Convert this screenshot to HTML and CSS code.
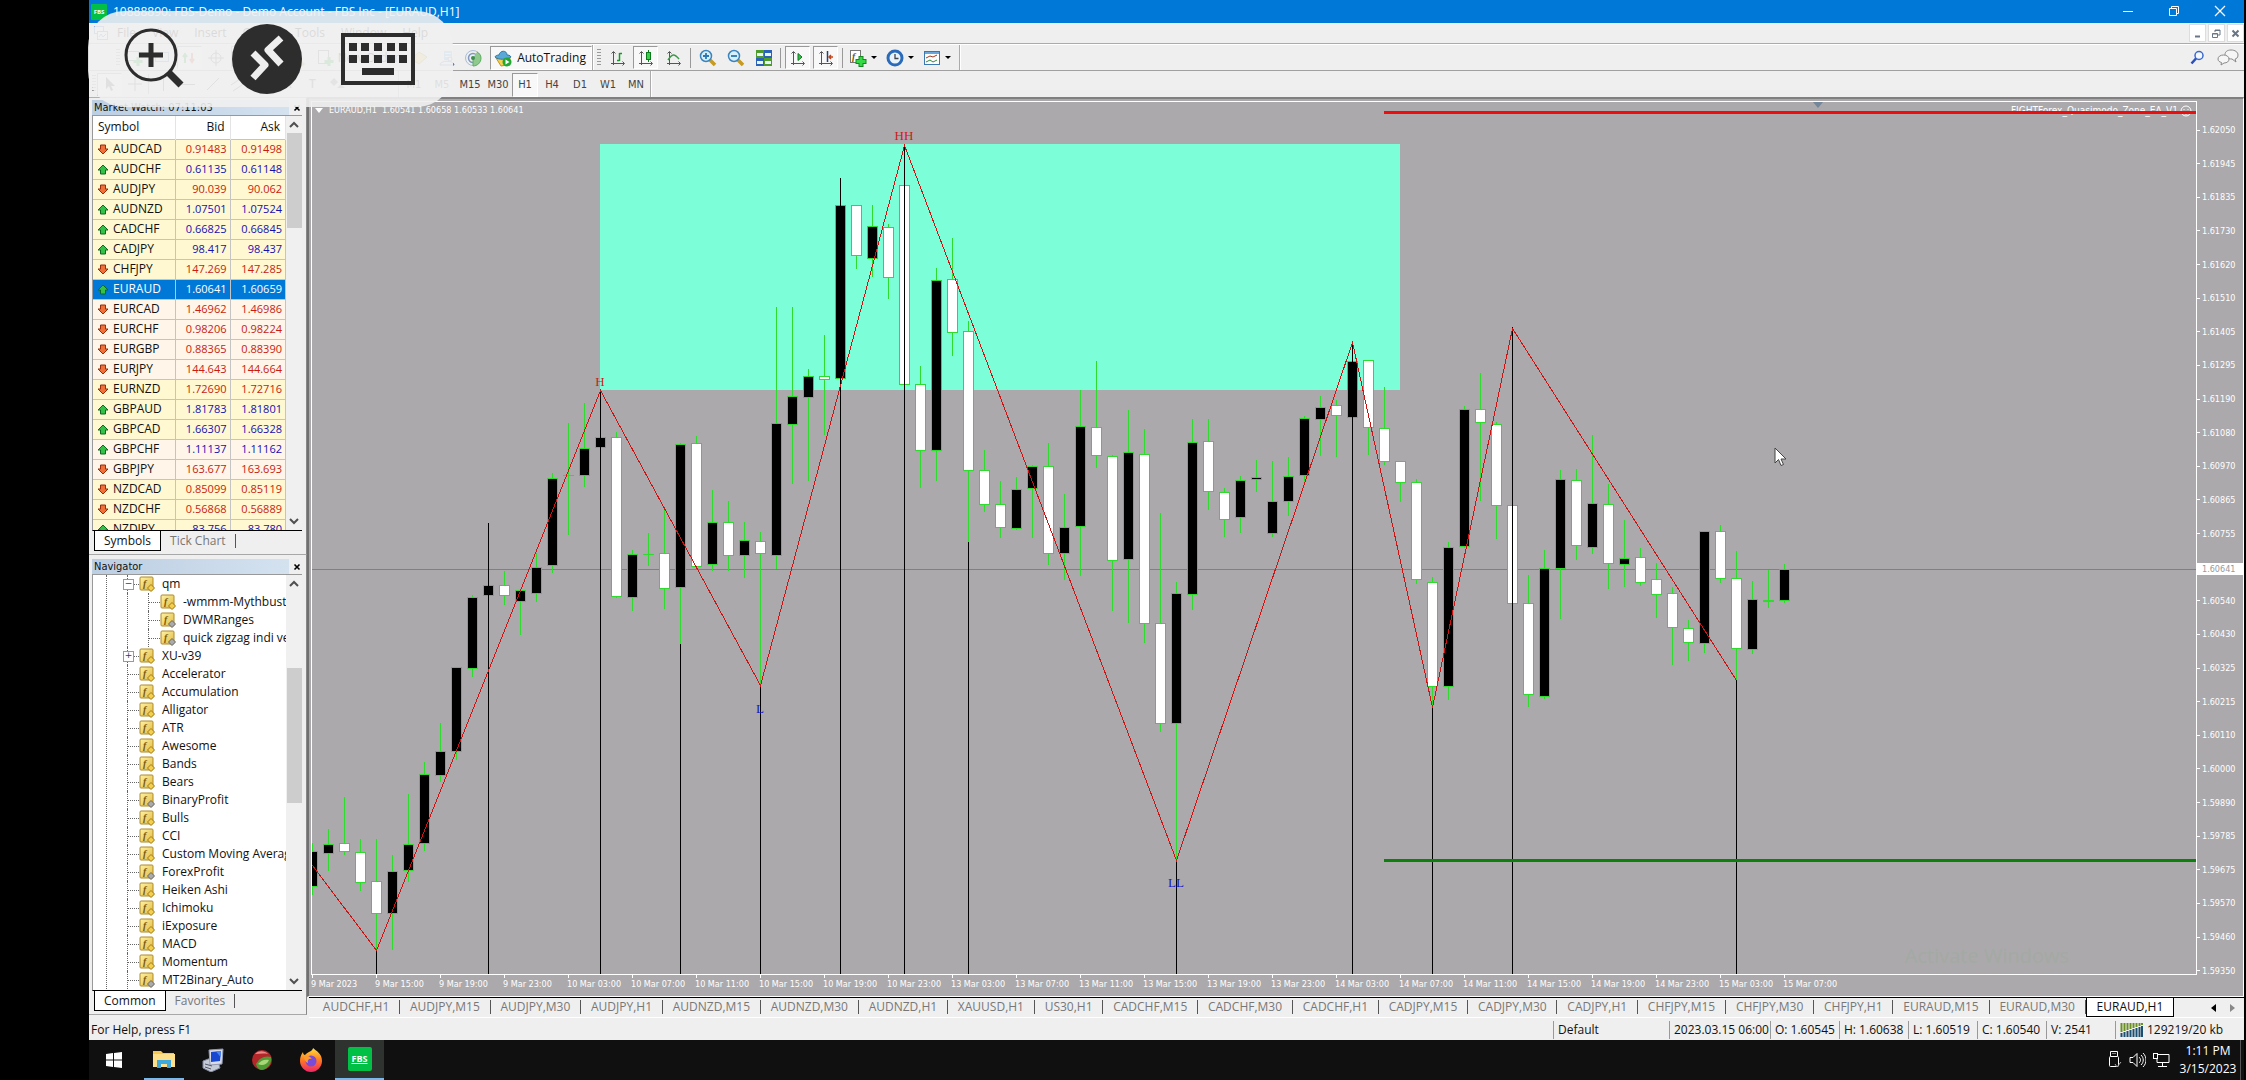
FILE: index.html
```html
<!DOCTYPE html>
<html lang="en">
<head>
<meta charset="utf-8">
<title>10888890: FBS-Demo - Demo Account - FBS Inc - [EURAUD,H1]</title>
<link rel="stylesheet" href="styles.css">
</head>
<body>
<svg class="defs" aria-hidden="true">
  <defs>
    <linearGradient id="gold" x1="0" y1="0" x2="1" y2="1"><stop offset="0" stop-color="#fdf3a8"/><stop offset="1" stop-color="#e3b93c"/></linearGradient>
    <linearGradient id="fire" x1="0" y1="0" x2="0" y2="1"><stop offset="0" stop-color="#ffdf3a"/><stop offset=".5" stop-color="#ff7b22"/><stop offset="1" stop-color="#f0246a"/></linearGradient>
    <symbol id="up" viewBox="0 0 12 11"><path d="M6 1 11 6H8.500V10H3.500V6H1Z" fill="#35c04a" stroke="#0e6a1c"/></symbol>
    <symbol id="down" viewBox="0 0 12 11"><path d="M6 10 11 5H8.500V1H3.500V5H1Z" fill="#f0703a" stroke="#9a2c08"/></symbol>
    <symbol id="fx" viewBox="0 0 16 16"><rect x="1" y="1" width="13" height="13" rx="1" fill="url(#gold)" stroke="#b08a28"/><text x="4" y="11" class="fx-letter">f</text><path d="M12 8.500 15.500 12 12 15.500 8.500 12Z" fill="#f3cf4e" stroke="#a07818"/></symbol>
    <symbol id="fx-custom" viewBox="0 0 16 16"><rect x="1" y="1" width="13" height="13" rx="1" fill="url(#gold)" stroke="#b08a28"/><text x="4" y="11" class="fx-letter">f</text><path d="M12 8.500 15.500 12 12 15.500 8.500 12Z" fill="#aaa" stroke="#666"/></symbol>
    <symbol id="chev-up" viewBox="0 0 10 8"><path d="M1 6 5 2l4 4" fill="none" stroke="#505050" stroke-width="2"/></symbol>
    <symbol id="chev-down" viewBox="0 0 10 8"><path d="M1 2 5 6l4-4" fill="none" stroke="#505050" stroke-width="2"/></symbol>
    <symbol id="x" viewBox="0 0 8 8"><path d="M1.500 1.500l5 5M6.500 1.500l-5 5" stroke="#000" stroke-width="1.600"/></symbol>
  </defs>
</svg>

<div class="desktop">
  <div class="app">
    <header class="titlebar">
      <span class="fbs">FBS</span>
      <h1>10888890: FBS-Demo - Demo Account - FBS Inc - [EURAUD,H1]</h1>
      <div class="window-buttons">
        <button aria-label="Minimize"><svg width="12" height="12"><path d="M1 6.500h10" stroke="#fff"/></svg></button>
        <button aria-label="Restore"><svg width="12" height="12" fill="none" stroke="#fff"><path d="M1.500 3.500h7v7h-7zM3.500 3V1.500h7v7H9"/></svg></button>
        <button aria-label="Close"><svg width="12" height="12"><path d="M1 1l10 10M11 1 1 11" stroke="#fff" stroke-width="1.200"/></svg></button>
      </div>
    </header>

    <nav class="menubar">
      <svg width="16" height="16"><rect x="1.500" y="1.500" width="9" height="7" fill="#fff" stroke="#3c78c8"/><rect x="4.500" y="6.500" width="10" height="8" fill="#fff" stroke="#3c78c8"/><path d="M6 12l2-3 2 3 3-3" fill="none" stroke="#3c78c8"/></svg>
      <button>File</button><button>View</button><button>Insert</button><button>Charts</button><button>Tools</button><button>Window</button><button>Help</button>
      <div class="mdi-buttons">
        <button aria-label="Minimize chart"><svg width="9" height="9"><path d="M2 7.500h5" stroke="#6a7686" stroke-width="2"/></svg></button>
        <button aria-label="Restore chart"><svg width="9" height="9" fill="none" stroke="#6a7686"><path d="M.5 4.500h5v4h-5zM3 3V1h5v5H6M.5 5h5M3 1.500h5"/></svg></button>
        <button aria-label="Close chart"><svg width="9" height="9"><path d="M1.500 1.500l6 6M7.500 1.500l-6 6" stroke="#6a7686" stroke-width="2"/></svg></button>
      </div>
    </nav>

    <div class="toolbar">
      <div class="group group-main">
        <i class="grip"></i>
        <button class="tool" aria-label="New chart"><svg width="18" height="18"><rect x="1.500" y="2.500" width="11" height="9" fill="#fff" stroke="#3a7a4a"/><path d="M12 8v9M7.500 12.500h9" stroke="#1fae2c" stroke-width="3"/></svg></button>
        <button class="tool" aria-label="Profiles"><svg width="18" height="18"><rect x="2.500" y="3.500" width="13" height="9" fill="#cfe3f8" stroke="#4a84c0"/></svg></button>
        <button class="tool pressed" aria-label="Market Watch"><svg width="18" height="18"><path d="M5 14V6M3 8l2-3 2 3" stroke="#1fae2c" stroke-width="2" fill="none"/><path d="M12 4v8M10 10l2 3 2-3" stroke="#e0532a" stroke-width="2" fill="none"/></svg></button>
        <button class="tool" aria-label="Data Window"><svg width="18" height="18" fill="none" stroke="#555"><circle cx="9" cy="9" r="5"/><path d="M9 1v16M1 9h16"/></svg></button>
        <button class="tool pressed" aria-label="Navigator"><svg width="18" height="18"><rect x="2.500" y="3.500" width="13" height="11" fill="#fff1b0" stroke="#b08a28"/></svg></button>
        <button class="tool" aria-label="Terminal"><svg width="18" height="18"><rect x="2.500" y="3.500" width="13" height="11" fill="#fff" stroke="#4a84c0"/></svg></button>
        <button class="tool" aria-label="Strategy Tester"><svg width="18" height="18"><circle cx="7" cy="7" r="5" fill="#bfe0f8" stroke="#4a84c0"/><path d="M11 11l5 5" stroke="#c79a20" stroke-width="3"/></svg></button>
        <button class="order"><svg width="18" height="18"><rect x="1.500" y="1.500" width="10" height="13" fill="#fff" stroke="#666"/><path d="M12 8v9M7.500 12.500h9" stroke="#1fae2c" stroke-width="3"/></svg>New Order</button>
        <button class="tool" aria-label="MetaEditor"><svg width="18" height="18"><path d="M1 10 9 3l8 5-8 7z" fill="#f3c64a" stroke="#b58a1c"/></svg></button>
        <button class="tool" aria-label="MQL5 community"><svg width="18" height="18"><path d="M7 2h8v9H7z" fill="#58b2ee"/><path d="M8 4.500h6M8 7.500h6" stroke="#fff"/><circle cx="13" cy="10" r="2" fill="#fff" stroke="#4a6aa0"/><path d="M3 16c0-5 14-5 14 0z" fill="#e8eef8" stroke="#4a6aa0"/></svg></button>
        <button class="tool" aria-label="Signals"><svg width="18" height="18" fill="none"><circle cx="9" cy="9" r="7.500" stroke="#a9bfd8"/><circle cx="9" cy="9" r="4.500" stroke="#8098c0" stroke-width="1.500"/><path d="M9 9v8c4 0 8-3 8-8 0-3-2-5-4-6" fill="#8fc98d" stroke="#5cb060"/><circle cx="9" cy="9" r="2" fill="#3c8c50"/></svg></button>
        <button class="auto pressed"><svg width="19" height="18"><path d="M2 9h14l-3 7-6 1z" fill="#f5cf4e" stroke="#c09320"/><path d="M1 8c3 3 12 3 16 0-1-2-3-2-4-2 0-5-7-5-8 0-2 0-4 1-4 2z" fill="#5aa8d8" stroke="#2f78a8"/><circle cx="13" cy="13" r="4.500" fill="#22a832"/><path d="M11.500 10.500v5l4-2.500z" fill="#fff"/></svg>AutoTrading</button>
      </div>
      <div class="group group-chart">
        <i class="grip"></i>
        <button class="tool" aria-label="Bar chart"><svg width="18" height="18" fill="none"><path d="M4.500 3v13M2 14.500h13M2.500 4.500l2-2 2 2M13.500 12.500l2 2-2 2" stroke="#555"/><path d="M10.500 4v8M8 11.500h2.500M10.500 4.500H13" stroke="#159a28" stroke-width="1.500"/></svg></button>
        <button class="tool pressed" aria-label="Candlesticks"><svg width="18" height="18" fill="none"><path d="M4.500 3v13M2 14.500h13M2.500 4.500l2-2 2 2M13.500 12.500l2 2-2 2" stroke="#555"/><path d="M11.500 1v12" stroke="#0d7a1c"/><rect x="9.500" y="3.500" width="4" height="7" fill="#3ad04c" stroke="#0d7a1c"/></svg></button>
        <button class="tool" aria-label="Line chart"><svg width="18" height="18" fill="none"><path d="M4.500 3v13M2 14.500h13M2.500 4.500l2-2 2 2M13.500 12.500l2 2-2 2" stroke="#555"/><path d="M3 11C7 5 9 4 14 10" stroke="#3a9a48" stroke-width="1.500"/></svg></button>
        <i class="sep"></i>
        <button class="tool" aria-label="Zoom in"><svg width="18" height="18"><path d="M11 11l5 5" stroke="#c79a20" stroke-width="3.500"/><circle cx="7" cy="7" r="5.500" fill="#d8f0fc" stroke="#3c84bc" stroke-width="1.500"/><path d="M4 7h6M7 4v6" stroke="#2c78b4" stroke-width="1.800"/></svg></button>
        <button class="tool" aria-label="Zoom out"><svg width="18" height="18"><path d="M11 11l5 5" stroke="#c79a20" stroke-width="3.500"/><circle cx="7" cy="7" r="5.500" fill="#d8f0fc" stroke="#3c84bc" stroke-width="1.500"/><path d="M4 7h6" stroke="#2c78b4" stroke-width="1.800"/></svg></button>
        <button class="tool" aria-label="Tile windows"><svg width="18" height="18"><path d="M1 1h8v8H1zM9 9h8v8H9z" fill="#4d9c2c"/><path d="M9 1h8v8H9zM1 9h8v8H1z" fill="#2a62b8"/><path d="M2 4h6v3H2zM10 4h6v3h-6zM2 12h6v3H2zM10 12h6v3h-6z" fill="#e8f4ff"/></svg></button>
        <i class="sep"></i>
        <button class="tool pressed" aria-label="Auto scroll"><svg width="18" height="18" fill="none"><path d="M4.500 3v13M2 14.500h13M2.500 4.500l2-2 2 2M13.500 12.500l2 2-2 2" stroke="#555"/><path d="M9 4.500v7l4-3.500z" fill="#35c04a" stroke="#0d7a1c"/></svg></button>
        <button class="tool pressed" aria-label="Chart shift"><svg width="18" height="18" fill="none"><path d="M4.500 3v13M2 14.500h13M2.500 4.500l2-2 2 2M13.500 12.500l2 2-2 2" stroke="#555"/><path d="M10.500 2v11" stroke="#27407a" stroke-width="1.500"/><path d="M16 8h-4M14 6l-2 2 2 2" stroke="#c0441c" stroke-width="1.500"/></svg></button>
        <i class="sep"></i>
        <button class="tool menu" aria-label="Indicators"><svg width="18" height="18"><rect x="1.500" y="1.500" width="10" height="12" fill="#fff" stroke="#777"/><text x="3" y="11" class="fx-letter">f</text><path d="M12 7v11M6.500 12.500h11" stroke="#14881e" stroke-width="5"/><path d="M12 8v9M7.500 12.500h9" stroke="#35d845" stroke-width="3"/></svg><i class="caret"></i></button>
        <button class="tool menu" aria-label="Periods"><svg width="18" height="18"><circle cx="9" cy="9" r="7" fill="#e8f4fc" stroke="#2a6ab8" stroke-width="3"/><path d="M9 5v4.500h3.500" fill="none" stroke="#444" stroke-width="1.300"/></svg><i class="caret"></i></button>
        <button class="tool menu" aria-label="Templates"><svg width="18" height="18"><rect x="1.500" y="2.500" width="15" height="13" fill="#fff" stroke="#3c78b0"/><path d="M2 4h14" stroke="#6aa8dc" stroke-width="2"/><path d="M3 9l4-2 3 1 4-2" fill="none" stroke="#a03a1c"/><path d="M3 13l4-2 3 2 4-2" fill="none" stroke="#2a8a3a"/></svg><i class="caret"></i></button>
      </div>
      <div class="toolbar-right">
        <button aria-label="Search"><svg width="15" height="15"><circle cx="9" cy="5.500" r="4" fill="#f4f8ff" stroke="#3a68cc" stroke-width="1.500"/><path d="M6 8.500 1.500 13.500" stroke="#2a50c0" stroke-width="2.600"/></svg></button>
        <button aria-label="Chat"><svg width="22" height="17" fill="#f6f6f6" stroke="#8a8a8a"><path d="M14 1c4 0 7 2 7 5s-2 4-3 4l1 3-4-3c-4 0-7-2-7-4.500S10 1 14 1z"/><path d="M6.500 6c3 0 5.500 1.500 5.500 4s-2 4-5 4l-3 2 .5-2.500C2.500 13 1 12 1 10c0-2.500 2.500-4 5.500-4z"/></svg></button>
      </div>
    </div>

    <div class="toolbar timeframes">
      <div class="group">
        <i class="grip"></i>
        <button class="tool pressed" aria-label="Cursor"><svg width="18" height="18"><path d="M5 2v12l3-3 2 5 2-1-2-4h4z" fill="#555"/></svg></button>
        <button class="tool" aria-label="Crosshair"><svg width="18" height="18"><path d="M9 2v14M2 9h14" stroke="#555"/></svg></button>
        <i class="sep"></i>
        <button class="tool" aria-label="Vertical line"><svg width="18" height="18"><path d="M9.500 2v14" stroke="#555"/></svg></button>
        <button class="tool" aria-label="Horizontal line"><svg width="18" height="18"><path d="M2 9.500h14" stroke="#555"/></svg></button>
        <button class="tool" aria-label="Trendline"><svg width="18" height="18"><path d="M3 15 15 3" stroke="#555"/></svg></button>
        <button class="tool" aria-label="Channel"><svg width="18" height="18"><path d="M2 10 14 2M4 16 16 8" stroke="#555"/></svg></button>
        <button class="tool" aria-label="Fibonacci"><svg width="18" height="18"><path d="M2 3.500h13M2 7.500h13M2 11.500h9" stroke="#888" stroke-dasharray="2 1"/></svg></button>
        <button class="tool letter">A</button>
        <button class="tool letter">T</button>
        <button class="tool" aria-label="Arrows"><svg width="18" height="18"><path d="M5 3l4 4-4 4-4-4zM12 9l4 4h-8z" fill="#777"/></svg></button>
      </div>
      <div class="group periods">
        <button>M1</button><button>M5</button><button>M15</button><button>M30</button><button class="pressed">H1</button><button>H4</button><button>D1</button><button>W1</button><button>MN</button>
      </div>
    </div>

    <div class="workspace">
      <aside class="side">
        <section class="panel market">
          <header class="caption"><h2>Market Watch: 07:11:03</h2><button aria-label="Close Market Watch"><svg width="8" height="8"><use href="#x"/></svg></button></header>
          <div class="list">
            <div class="list-view">
              <table class="quotes">
                <thead><tr><th>Symbol</th><th>Bid</th><th>Ask</th></tr></thead>
                <tbody id="quotes"></tbody>
              </table>
            </div>
            <div class="scroll"><svg width="10" height="8"><use href="#chev-up"/></svg><i></i><svg width="10" height="8"><use href="#chev-down"/></svg></div>
          </div>
          <div class="tabs"><button class="active">Symbols</button><button>Tick Chart</button></div>
        </section>
        <section class="panel navigator">
          <header class="caption"><h2>Navigator</h2><button aria-label="Close Navigator"><svg width="8" height="8"><use href="#x"/></svg></button></header>
          <div class="list">
            <div class="list-view tree">
              <ul>
                <li class="open"><svg><use href="#fx"/></svg>qm</li>
                <li class="nest">
                  <ul>
                    <li><svg><use href="#fx"/></svg>-wmmm-Mythbusters</li>
                    <li><svg><use href="#fx-custom"/></svg>DWMRanges</li>
                    <li><svg><use href="#fx-custom"/></svg>quick zigzag indi vers</li>
                  </ul>
                </li>
                <li class="closed"><svg><use href="#fx"/></svg>XU-v39</li>
                <li><svg><use href="#fx"/></svg>Accelerator</li>
                <li><svg><use href="#fx"/></svg>Accumulation</li>
                <li><svg><use href="#fx"/></svg>Alligator</li>
                <li><svg><use href="#fx"/></svg>ATR</li>
                <li><svg><use href="#fx"/></svg>Awesome</li>
                <li><svg><use href="#fx"/></svg>Bands</li>
                <li><svg><use href="#fx"/></svg>Bears</li>
                <li><svg><use href="#fx-custom"/></svg>BinaryProfit</li>
                <li><svg><use href="#fx"/></svg>Bulls</li>
                <li><svg><use href="#fx"/></svg>CCI</li>
                <li><svg><use href="#fx"/></svg>Custom Moving Average</li>
                <li><svg><use href="#fx-custom"/></svg>ForexProfit</li>
                <li><svg><use href="#fx"/></svg>Heiken Ashi</li>
                <li><svg><use href="#fx"/></svg>Ichimoku</li>
                <li><svg><use href="#fx"/></svg>iExposure</li>
                <li><svg><use href="#fx"/></svg>MACD</li>
                <li><svg><use href="#fx"/></svg>Momentum</li>
                <li><svg><use href="#fx-custom"/></svg>MT2Binary_Auto</li>
              </ul>
            </div>
            <div class="scroll"><svg width="10" height="8"><use href="#chev-up"/></svg><i></i><svg width="10" height="8"><use href="#chev-down"/></svg></div>
          </div>
          <div class="tabs"><button class="active">Common</button><button>Favorites</button></div>
        </section>
      </aside>

      <main class="chart-area">
        <div class="chart">
          <div class="plot">
            <svg class="plot-canvas" id="plot" role="img" aria-label="EURAUD H1 candlestick chart"></svg>
            <p class="chart-info"><svg width="8" height="5"><path d="M0 0h8L4 5z" fill="#fff"/></svg>EURAUD,H1&nbsp; 1.60541 1.60658 1.60533 1.60641</p>
            <p class="chart-ea">FIGHTForex_Quasimodo_Zone_EA_V1<svg width="12" height="12" fill="none" stroke="#fff"><circle cx="6" cy="6" r="5"/><path d="M4 4v1M8 4v1M3.500 7.500c1 2 4 2 5 0"/></svg></p>
            <span class="watermark">Activate Windows</span>
            <svg class="shift-mark" width="10" height="6"><path d="M0 0h10L5 6z" fill="#74869a"/></svg>
            <svg class="pointer" width="13" height="20"><path d="M1 1v15l3.500-3.500L7 18.500l2.500-1L7 12h5z" fill="#fff" stroke="#444"/></svg>
          </div>
          <div class="prices">
            <ul>
              <li>1.62050</li><li>1.61945</li><li>1.61835</li><li>1.61730</li><li>1.61620</li><li>1.61510</li><li>1.61405</li><li>1.61295</li><li>1.61190</li><li>1.61080</li><li>1.60970</li><li>1.60865</li><li>1.60755</li><li class="current">1.60641</li><li>1.60540</li><li>1.60430</li><li>1.60325</li><li>1.60215</li><li>1.60110</li><li>1.60000</li><li>1.59890</li><li>1.59785</li><li>1.59675</li><li>1.59570</li><li>1.59460</li><li>1.59350</li>
            </ul>
          </div>
          <ul class="times">
            <li>9 Mar 2023</li><li>9 Mar 15:00</li><li>9 Mar 19:00</li><li>9 Mar 23:00</li><li>10 Mar 03:00</li><li>10 Mar 07:00</li><li>10 Mar 11:00</li><li>10 Mar 15:00</li><li>10 Mar 19:00</li><li>10 Mar 23:00</li><li>13 Mar 03:00</li><li>13 Mar 07:00</li><li>13 Mar 11:00</li><li>13 Mar 15:00</li><li>13 Mar 19:00</li><li>13 Mar 23:00</li><li>14 Mar 03:00</li><li>14 Mar 07:00</li><li>14 Mar 11:00</li><li>14 Mar 15:00</li><li>14 Mar 19:00</li><li>14 Mar 23:00</li><li>15 Mar 03:00</li><li>15 Mar 07:00</li>
          </ul>
        </div>
        <div class="chart-tabs">
          <div class="chart-tab-list">
            <button>AUDCHF,H1</button><button>AUDJPY,M15</button><button>AUDJPY,M30</button><button>AUDJPY,H1</button><button>AUDNZD,M15</button><button>AUDNZD,M30</button><button>AUDNZD,H1</button><button>XAUUSD,H1</button><button>US30,H1</button><button>CADCHF,M15</button><button>CADCHF,M30</button><button>CADCHF,H1</button><button>CADJPY,M15</button><button>CADJPY,M30</button><button>CADJPY,H1</button><button>CHFJPY,M15</button><button>CHFJPY,M30</button><button>CHFJPY,H1</button><button>EURAUD,M15</button><button>EURAUD,M30</button><button class="active">EURAUD,H1</button>
          </div>
          <div class="tab-arrows">
            <button aria-label="Scroll tabs left"><svg width="5" height="8"><path d="M5 0v8L0 4z"/></svg></button>
            <button aria-label="Scroll tabs right"><svg width="5" height="8"><path d="M0 0v8l5-4z" fill="#888"/></svg></button>
          </div>
        </div>
      </main>
    </div>

    <footer class="status">
      <span class="help">For Help, press F1</span>
      <span class="cell wide">Default</span>
      <span class="cell date">2023.03.15 06:00</span>
      <span class="cell">O: 1.60545</span>
      <span class="cell">H: 1.60638</span>
      <span class="cell">L: 1.60519</span>
      <span class="cell">C: 1.60540</span>
      <span class="cell">V: 2541</span>
      <span class="cell traffic"><svg width="23" height="14"><path d="M1.500 0v9M4.500 0v8M7.500 0v7M10.500 0v6M13.500 0v5M16.500 0v4M19.500 0v3M22 0v2" stroke="#6b8e23" stroke-width="2"/><path d="M1.500 10v4M4.500 9v5M7.500 8v6M10.500 7v7M13.500 6v8M16.500 5v9M19.500 4v10M22 3v11" stroke="#1c4e70" stroke-width="2"/></svg>129219/20 kb</span>
    </footer>
  </div>

  <div class="taskbar">
    <button aria-label="Start"><svg width="16" height="16" fill="#fff"><path d="M0 2l7-1v6.500H0zM8 1l8-1v7.500H8zM0 8.500h7V15l-7-1zM8 8.500h8V16l-8-1z"/></svg></button>
    <button class="running" aria-label="File Explorer"><svg width="24" height="20"><path d="M1 2h8l2 2h11v14H1z" fill="#f5c951"/><path d="M1 5h22v13H1z" fill="#ffe08a"/><path d="M5 19v-8h14v8h-4v-4H9v4z" fill="#3fa9dc"/></svg></button>
    <button aria-label="Remote Desktop"><svg width="24" height="24"><path d="M2 13 10 10l7 3 2 7-9 4-8-4z" fill="#c4cbd6" stroke="#8088a0"/><path d="M8 2l14-1-1 15-12 1z" fill="#d8dce8" stroke="#9098b0"/><path d="M10 4l10-1-1 10-9 1z" fill="#1848d0"/><path d="M15 3.500l5-.5-.5 6z" fill="#4a86f0"/><path d="M4 16l7 2M4 19l6 2" stroke="#556"/></svg></button>
    <button aria-label="Security"><svg width="22" height="22"><circle cx="11" cy="11" r="10" fill="#b3262a"/><path d="M4 5c4-4 10-3 13 0-5-1-9 0-13 0z" fill="#e88"/><path d="M5 15C8 9 14 6 20 8c1 6-3 12-9 13-3 0-5-2-6-6z" fill="#4f9c34"/><path d="M7 15c3-4 7-5 11-4-2 5-7 6-11 4z" fill="#a8d878"/></svg></button>
    <button aria-label="Firefox"><svg width="24" height="24"><path d="M12 3c1-1 2-2 2-3 3 3 9 5 9 13 0 6-5 11-11 11S1 19 1 13c0-4 1-6 3-9 0 2 1 3 2 3 1-1 3-3 6-4z" fill="url(#fire)"/><circle cx="12" cy="13" r="5.500" fill="#7a4bd8"/><path d="M5 8c3-1 6 0 8 3-3-1-5 1-4 4-3-1-4-4-4-7z" fill="#ff9c28"/></svg></button>
    <button class="current" aria-label="FBS terminal"><span class="fbs large">FBS</span></button>
    <div class="tray">
      <svg width="14" height="20" fill="none" stroke="#fff"><path d="M2.500 6V1.500h7V6M5 3v1M7 3v1"/><rect x="1.500" y="6.500" width="9" height="10" rx="1"/><path d="M7 14l2 3 4-5" stroke="#aaa"/></svg>
      <svg width="17" height="16" fill="none" stroke="#fff"><path d="M1 5.500h3l4-4v13l-4-4H1zM10 5c2 2 2 4 0 6M12 3c3 3 3 7 0 10M14 1c4 4 4 10 0 14"/></svg>
      <svg width="17" height="16" fill="none" stroke="#fff"><path d="M5 2.500h11v8H4V7M5 14.500h9M9.500 11v3"/><rect x=".5" y="1.500" width="4" height="5"/></svg>
      <div class="clock"><span>1:11 PM</span><span>3/15/2023</span></div>
      <i class="peek"></i>
    </div>
  </div>

  <div class="session-bar">
    <button class="zoom" aria-label="Zoom"><svg width="62" height="62" fill="none" stroke="#2d2d2d"><circle cx="28" cy="27" r="25" stroke-width="3"/><path d="M28 15v24M16 27h24" stroke-width="5"/><path d="M45 44l13 13" stroke-width="7"/></svg></button>
    <button aria-label="Session"><svg width="70" height="70"><circle cx="35" cy="35" r="35" fill="#2d2d2d"/><path d="M21 29l12 12-12 13M49 14 36 26l13 14" fill="none" stroke="#eee" stroke-width="7" stroke-linejoin="round"/></svg></button>
    <button aria-label="Keyboard"><svg width="74" height="52"><rect x="2" y="2" width="70" height="48" fill="none" stroke="#2d2d2d" stroke-width="4"/><path d="M8 10h8v8H8zM20 10h8v8h-8zM33 10h8v8h-8zM46 10h8v8h-8zM58 10h8v8h-8zM8 22h8v8H8zM20 22h8v8h-8zM33 22h8v8h-8zM46 22h8v8h-8zM58 22h8v8h-8zM21 35h32v7H21z" fill="#2d2d2d"/></svg></button>
  </div>
</div>
<script src="script.js"></script>
</body>
</html>
```
FILE: styles.css
```css
* { box-sizing: border-box; }

body {
  margin: 0;
  background: #000;
  color: #111;
  font: 12px/16px "Open Sans", "Noto Sans", sans-serif;
}

h1, h2, p, ul { margin: 0; padding: 0; font-size: inherit; font-weight: inherit; }
ul { list-style: none; }
button { margin: 0; padding: 0; border: 0; background: none; color: inherit; font: inherit; }
svg { display: block; flex: none; }
.defs { position: absolute; width: 0; height: 0; }
.fx-letter { font: italic bold 10px "Liberation Serif", serif; fill: #7a5a10; }

.desktop {
  position: relative;
  display: flex;
  flex-direction: column;
  height: 100vh;
  padding: 0 2px 0 89px;
}
.app { flex: 1; min-height: 0; display: flex; flex-direction: column; background: #efefef; }

/* Title and menu */
.titlebar { display: flex; align-items: center; gap: 6px; height: 23px; padding: 0 18px 0 2px; background: #0078d7; color: #fff; }
.titlebar h1 { flex: 1; }
.fbs { display: grid; place-items: center; width: 16px; height: 16px; border-radius: 1px; background: #02bf45; color: #fff; font: bold 6px/8px "Open Sans", sans-serif; }
.fbs.large { width: 24px; height: 24px; border-radius: 2px; font-size: 9px; text-decoration: underline; }
.window-buttons { display: flex; gap: 34px; padding-bottom: 2px; }

.menubar { display: flex; align-items: center; height: 22px; padding-left: 4px; border-bottom: 2px groove #fff; }
.menubar > button { padding: 0 8px; }
.mdi-buttons { display: flex; gap: 2px; margin-left: auto; }
.mdi-buttons button { display: grid; place-items: center; width: 17px; height: 18px; border: 1px solid #ddd; background: #fff; }

/* Toolbars */
.toolbar { display: flex; height: 26px; border-bottom: 1px solid #a0a0a0; }
.group { display: flex; align-items: center; padding: 0 2px; border-right: 2px groove #fff; }
.group-main { width: 505px; justify-content: flex-end; gap: 2px; padding-right: 0; }
.group-chart { gap: 3px; padding-right: 4px; }
.tool { display: grid; place-items: center; width: 25px; height: 23px; }
.tool.menu { display: flex; align-items: center; gap: 4px; width: 34px; padding-left: 2px; }
.tool.letter { font-weight: 600; color: #555; }
.pressed { border: 1px solid; border-color: #999 #fff #fff #999; background: #f8f8f8; }
.grip { width: 4px; height: 18px; margin: 0 1px; background: repeating-linear-gradient(#999 0 1px, transparent 1px 3px); }
.sep { width: 1px; height: 20px; margin: 0 1px; background: #999; }
.caret { border: 3px solid transparent; border-top-color: #000; border-bottom: 0; }
.order { display: flex; align-items: center; gap: 3px; padding: 0 5px; }
.auto { display: flex; align-items: center; gap: 4px; height: 24px; margin-left: 3px; padding: 0 5px 0 3px; }
.toolbar-right { display: flex; align-items: center; gap: 12px; margin-left: auto; padding-right: 5px; }

.timeframes { border-bottom: 0; }
.timeframes .group:first-child { width: 311px; }
.periods { padding: 2px 0 0; border-right-color: #fff; color: #444; font: 11px/16px "DejaVu Sans Condensed", "DejaVu Sans", sans-serif; }
.periods button { width: 28px; height: 24px; }
.periods .pressed { width: 26px; }

/* Workspace */
.workspace { flex: 1; min-height: 0; display: flex; }
.side { display: flex; flex-direction: column; width: 218px; padding-bottom: 3px; border-top: 1px solid #b0b0b0; }
.panel { display: flex; flex-direction: column; min-height: 0; padding: 2px 4px 3px 3px; border-right: 1px solid #888; border-bottom: 1px solid #a8a8a8; }
.market { flex: 458 0 0; }
.navigator { flex: 459 0 0; padding-top: 4px; }
.caption { display: flex; align-items: center; justify-content: space-between; height: 15px; padding-right: 1px; background: linear-gradient(90deg, #bccee2, #d4e2f0 94%, #efefef 94%); }
.caption h2 { padding-left: 2px; font: 11px/14px "DejaVu Sans Condensed", "DejaVu Sans", sans-serif; }
.list { flex: 1; min-height: 0; display: flex; border: 1px solid #999; border-right: 0; border-bottom: 1px solid #000; background: #fff; }
.list-view { flex: 1; min-width: 0; overflow: hidden; }
.scroll { display: flex; flex-direction: column; align-items: center; width: 16px; padding: 5px 0; background: #f0f0f0; }
.scroll i { width: 15px; background: #cdcdcd; }
.market .scroll i { height: 95px; margin: 4px 0 auto; }
.navigator .scroll i { height: 135px; margin: 80px 0 auto; }

.quotes { width: 193px; border-collapse: collapse; table-layout: fixed; }
.quotes th { height: 23px; padding: 0 5px; border-right: 1px solid #e4e4e4; font-weight: 400; text-align: right; }
.quotes th:first-child { width: 82px; padding: 0 5px; text-align: left; }
.quotes th:nth-child(2) { width: 55px; }
.quotes td { height: 20px; padding: 0 3px 0 4px; border: 1px solid #c4c4c4; border-left: 0; background: #fff8d1; text-align: right; font-size: 11px; }
.quotes td:first-child { font-size: 12px; }
.quotes .quiet td { background: #fff5e8; }
.quotes .name { display: flex; align-items: center; gap: 4px; }
.quotes .name svg { width: 12px; height: 11px; }
.quotes .rise { color: #1410b4; }
.quotes .fall { color: #c81c10; }
.quotes .selected td { background: #0078d7; color: #fff; }

.tabs { display: flex; height: 20px; padding-left: 2px; }
.tabs button { padding: 0 9px; color: #777; }
.tabs button:last-child { height: 14px; margin-top: 3px; line-height: 14px; border-right: 1px solid #555; }
.tabs .active { border: 1px solid #000; border-top: 0; background: #fff; color: #111; }

.tree { padding-left: 13px; white-space: nowrap; }
.tree > ul { padding-left: 20px; border-left: 1px dotted #666; }
.tree li { position: relative; display: flex; align-items: center; height: 18px; border-left: 1px dotted #666; }
.tree li::before { content: ""; flex: none; width: 11px; border-top: 1px dotted #666; }
.tree li svg { width: 16px; height: 16px; margin-right: 7px; }
.tree .nest { height: 54px; padding-left: 20px; }
.tree .nest::before { display: none; }
.tree .open::after, .tree .closed::after {
  content: "−";
  position: absolute;
  left: -5px;
  width: 9px;
  height: 9px;
  border: 1px solid #999;
  background: #fff;
  color: #246;
  font: 9px/7px "DejaVu Sans", sans-serif;
  text-align: center;
}
.tree .closed::after { content: "+"; }

/* Chart */
.chart-area { flex: 1; min-width: 0; display: flex; flex-direction: column; }
.chart {
  flex: 1;
  min-height: 0;
  display: grid;
  grid-template: minmax(0, 1fr) 21px / minmax(0, 1fr) 46px;
  padding: 2px 0 0 2px;
  border: solid;
  border-color: #808080 #fff #fff #707070;
  border-width: 2px 1px 1px 2px;
  background: #aba9ab;
  color: #fff;
  font: 9px/12px "DejaVu Sans Condensed", "DejaVu Sans", sans-serif;
}
.plot { position: relative; z-index: 0; border: 1px solid #fff; overflow: hidden; }
.plot-canvas { width: 100%; height: 100%; shape-rendering: crispEdges; }
.plot-canvas text { font: 13px "Liberation Serif", serif; text-anchor: middle; }
.chart-info { position: absolute; left: 3px; top: 2px; display: flex; align-items: center; gap: 6px; }
.chart-ea { position: absolute; right: 4px; top: 3px; z-index: -1; display: flex; align-items: center; gap: 2px; font-size: 10px; }
.watermark { position: absolute; right: 127px; bottom: 6px; color: #a3aaa3; font: 20px/24px "Open Sans", sans-serif; }
.shift-mark { position: absolute; top: 0; right: 373px; }
.pointer { position: absolute; left: 1462px; top: 345px; }

.prices { grid-row: span 2; padding: 23px 0 19px; }
.prices ul { display: flex; flex-direction: column; justify-content: space-between; height: 100%; }
.prices li { display: flex; align-items: center; height: 12px; }
.prices li::before { content: ""; width: 3px; margin-right: 2px; border-top: 1px solid #fff; }
.prices .current { position: relative; top: 2px; background: #fff; color: #9a989a; }

.times { display: grid; grid-template-columns: repeat(24, 64px); overflow: hidden; white-space: nowrap; }
.times li::before { content: ""; display: block; width: 1px; height: 3px; margin-left: 1px; background: #fff; }

.chart-tabs { display: flex; height: 21px; margin-left: 2px; border-top: 1px solid #000; border-bottom: 1px solid #fff; }
.chart-tab-list { flex: 1; min-width: 0; display: flex; margin-right: 37px; padding-left: 4px; }
.chart-tab-list button { flex: auto; height: 14px; margin-top: 2px; border-right: 1px solid #555; color: #777; line-height: 14px; white-space: nowrap; }
.chart-tab-list .active { height: 19px; margin-top: 0; border: 1px solid #000; border-top: 0; background: #fff; color: #111; line-height: 18px; }
.tab-arrows { display: flex; align-items: center; gap: 14px; padding-right: 9px; }

/* Status bar */
.status { display: flex; align-items: center; height: 22px; padding-top: 2px; }
.help { flex: 1; padding-left: 2px; }
.cell { display: flex; align-items: center; gap: 4px; width: 69px; height: 18px; padding-left: 4px; border-left: 1px solid #999; white-space: nowrap; }
.cell.wide { width: 116px; }
.cell.date { width: 101px; }
.cell.traffic { width: 129px; }

/* Windows taskbar */
.taskbar { display: flex; height: 40px; background: #101010; color: #fff; }
.taskbar button { display: grid; place-items: center; width: 49px; }
.taskbar .running, .taskbar .current { border-bottom: 2px solid #76b9ed; }
.taskbar .running { width: 40px; margin: 0 4px 0 6px; }
.taskbar .current { background: #2f3330; }
.tray { display: flex; align-items: center; gap: 7px; margin-left: auto; padding-right: 3px; }
.clock { display: flex; flex-direction: column; gap: 2px; width: 62px; margin-right: -6px; text-align: center; }
.peek { align-self: stretch; width: 1px; background: #555; }

/* Remote session bar floating over the desktop */
.session-bar {
  position: absolute;
  left: 88px;
  top: 11px;
  display: flex;
  align-items: center;
  justify-content: space-between;
  width: 365px;
  height: 96px;
  padding: 0 38px 0 35px;
  border-radius: 36px;
  background: rgba(240, 240, 240, .9);
}
.zoom { width: 69px; }
```
FILE: script.js
```js
const NS = "http://www.w3.org/2000/svg";

// Market Watch rows: symbol, bid, ask, direction, row state
const quotes = [
  ["AUDCAD", "0.91483", "0.91498", "fall"], ["AUDCHF", "0.61135", "0.61148", "rise"],
  ["AUDJPY", "90.039", "90.062", "fall"], ["AUDNZD", "1.07501", "1.07524", "rise"],
  ["CADCHF", "0.66825", "0.66845", "rise"], ["CADJPY", "98.417", "98.437", "rise"],
  ["CHFJPY", "147.269", "147.285", "fall"], ["EURAUD", "1.60641", "1.60659", "rise", "selected"],
  ["EURCAD", "1.46962", "1.46986", "fall", "quiet"], ["EURCHF", "0.98206", "0.98224", "fall", "quiet"],
  ["EURGBP", "0.88365", "0.88390", "fall", "quiet"], ["EURJPY", "144.643", "144.664", "fall", "quiet"],
  ["EURNZD", "1.72690", "1.72716", "fall"], ["GBPAUD", "1.81783", "1.81801", "rise"],
  ["GBPCAD", "1.66307", "1.66328", "rise"], ["GBPCHF", "1.11137", "1.11162", "rise", "quiet"],
  ["GBPJPY", "163.677", "163.693", "fall", "quiet"], ["NZDCAD", "0.85099", "0.85119", "fall"],
  ["NZDCHF", "0.56868", "0.56889", "fall"], ["NZDJPY", "83.756", "83.780", "rise"]
];
document.getElementById("quotes").innerHTML = quotes.map(([name, bid, ask, dir, state = ""]) =>
  `<tr class="${state}"><td><span class="name"><svg><use href="#${dir === "rise" ? "up" : "down"}"/></svg>${name}</span></td>` +
  `<td class="${dir}">${bid}</td><td class="${dir}">${ask}</td></tr>`).join("");

// Candles: fill (b = bull, w = bear), high, body top, body bottom, low
const candles = [
  ["b",843,851,886,895],["b",829,844,853,871],["w",797,843,851,855],["w",839,852,882,891],["w",839,881,913,950],
  ["b",855,871,913,950],["b",794,844,870,882],["b",762,774,843,851],["b",723,751,775,782],["b",667,667,751,760],
  ["b",595,597,668,677],["b",585,585,595,595],["w",571,585,595,605],["b",589,590,601,635],["b",553,567,593,602],
  ["b",473,478,565,573],["b",423,475,475,535],["b",403,448,475,487],["b",437,437,447,447],["w",432,437,596,598],
  ["b",550,554,597,611],["b",533,554,554,566],["w",508,553,588,609],["b",443,444,587,644],["w",436,443,566,568],
  ["b",490,522,564,571],["w",501,522,555,571],["b",522,540,555,578],["w",532,541,553,685],["b",307,423,555,569],
  ["b",307,396,424,484],["b",369,376,397,481],["w",335,376,379,435],["b",205,205,378,378],["w",205,205,255,269],
  ["b",205,226,258,277],["w",224,227,277,299],["w",185,185,384,384],["w",366,384,450,488],["b",268,280,450,481],
  ["w",238,279,332,356],["w",321,331,470,542],["w",450,470,504,512],["w",481,504,527,538],["b",477,489,528,530],
  ["b",465,466,488,538],["w",443,466,553,565],["b",494,527,553,580],["b",390,426,526,576],["w",361,427,455,468],
  ["w",455,456,560,611],["b",410,452,559,623],["w",429,454,623,643],["w",513,623,723,732],["b",582,593,723,860],
  ["b",419,442,594,610],["w",419,441,491,510],["w",488,492,519,537],["b",476,480,517,533],["b",460,477,479,492],
  ["b",461,501,533,537],["b",457,476,501,516],["b",416,418,475,482],["b",396,407,419,456],["w",400,405,415,457],
  ["b",361,361,417,417],["w",360,360,427,455],["w",387,428,461,465],["w",461,461,482,502],["w",479,482,579,584],
  ["w",577,582,686,706],["b",542,547,686,700],["b",406,409,546,548],["w",373,409,422,501],["w",422,424,505,539],
  ["w",505,505,603,603],["w",575,603,694,707],["b",550,568,696,699],["b",470,479,568,619],["w",469,480,545,560],
  ["b",435,503,547,554],["w",484,504,563,589],["b",520,558,564,587],["w",548,557,582,586],["w",563,579,594,618],
  ["w",587,593,627,665],["w",620,628,642,661],["b",531,531,643,653],["w",525,531,578,583],["w",551,578,648,680],
  ["b",581,599,649,654],["b",570,600,601,608],["b",564,569,600,603]
];
// Vertical markers: candle index, starting height
const markers = [[4,950],[11,523],[18,390],[23,644],[28,685],[33,178],[37,144],[41,542],[54,860],[65,341],[70,707],[75,327],[89,680]];
const zigzag = "312,865 376,950 600,390 760,685 904,145 1176,860 1352,342 1432,707 1512,328 1736,680";

const plot = document.getElementById("plot");
const layer = document.createElementNS(NS, "g");
layer.setAttribute("transform", "translate(-312 -102)");
const at = i => 312 + 16 * i;

let out = `<rect x="600" y="144" width="800" height="246" fill="#7cffd9"/>`;
out += `<rect x="312" y="569" width="4000" height="1" fill="#708498"/>`;
candles.forEach(([kind, high, top, bottom, low], i) => {
  const x = at(i);
  out += `<rect x="${x}" y="${high}" width="1" height="${low - high}" fill="#2edc2e"/>`;
  out += `<rect x="${x - 5}" y="${top}" width="11" height="${bottom - top + 1}" fill="#2edc2e"/>`;
  if (bottom - top > 1) {
    out += `<rect x="${x - 4}" y="${top + 1}" width="9" height="${bottom - top - 1}" fill="${kind === "b" ? "#000" : "#fff"}"/>`;
  }
});
markers.forEach(([i, top]) => { out += `<rect x="${at(i)}" y="${top}" width="1" height="1600"/>`; });
out += `<polyline points="${zigzag}" transform="translate(.5 .5)" fill="none" stroke="#cc1414"/>`;
out += `<rect x="1384" y="111" width="4000" height="3" fill="#ee0c0c"/>`;
out += `<rect x="1384" y="859" width="4000" height="3" fill="#0c800c"/>`;
out += `<text x="600" y="386" fill="#d01818">H</text><text x="904" y="140" fill="#d01818">HH</text>`;
out += `<text x="760" y="713" fill="#1414c8">L</text><text x="1176" y="887" fill="#1414c8">LL</text>`;
layer.innerHTML = out;
plot.append(layer);
```
